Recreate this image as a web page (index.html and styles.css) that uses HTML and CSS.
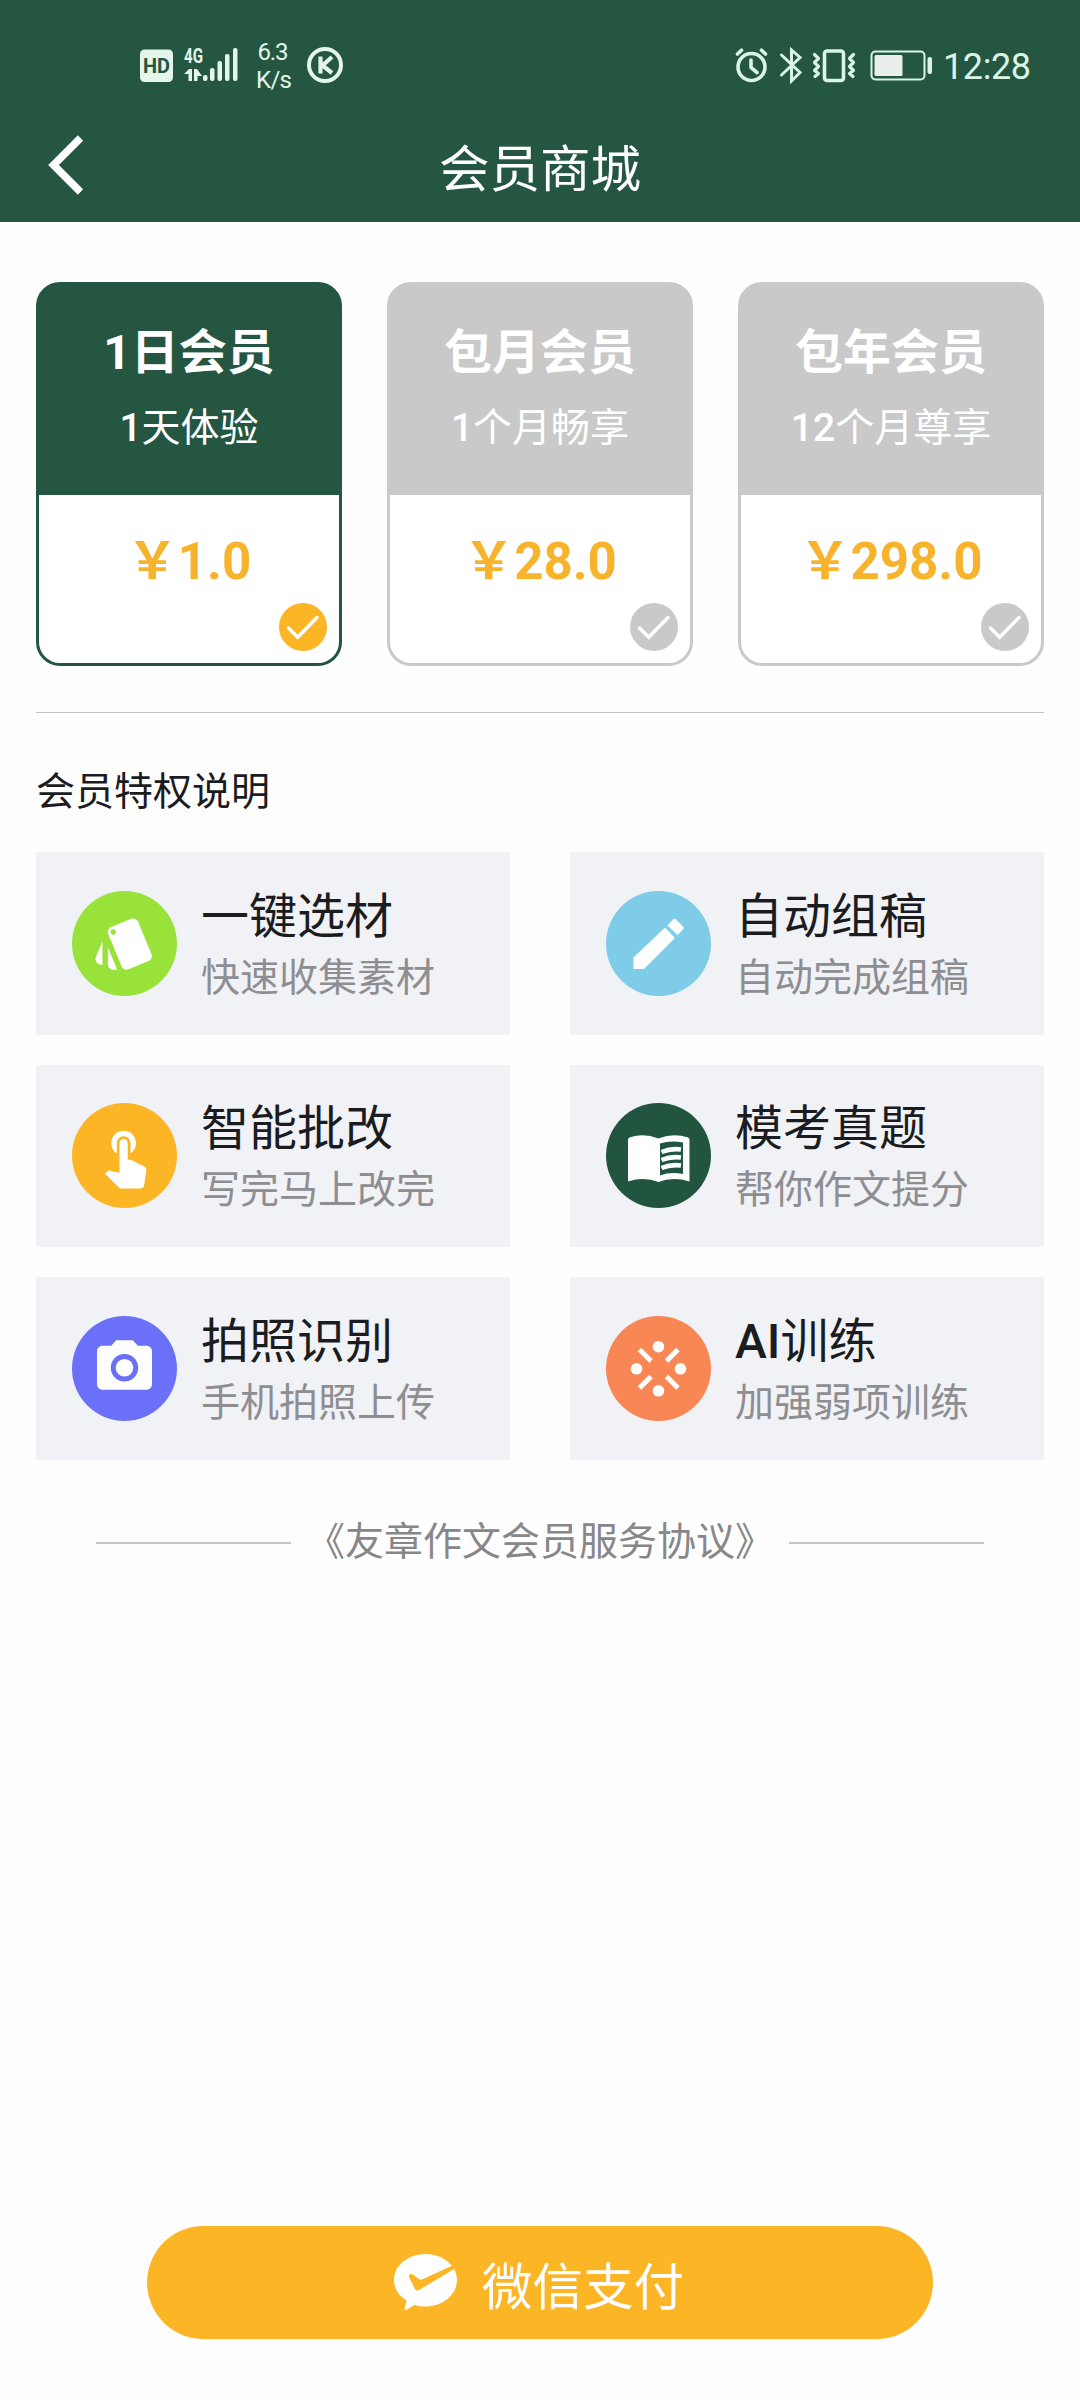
FILE: index.html
```html
<!DOCTYPE html>
<html lang="zh-CN">
<head>
<meta charset="utf-8">
<title>会员商城</title>
<link rel="stylesheet" href="styles.css">
</head>
<body>
<div class="app">
  <header class="top">
    <div class="status">
      <svg class="status-left" width="210" height="60" viewBox="138 36 210 60" fill="#e4f5ea">
        <rect x="140" y="49.500" width="33" height="32.500" rx="4.500"/>
        <text x="156.500" y="73" font-size="20.500" font-weight="700" text-anchor="middle" textLength="27" lengthAdjust="spacingAndGlyphs" fill="#245642">HD</text>
        <text x="184" y="62.500" font-size="20" font-weight="700" textLength="19" lengthAdjust="spacingAndGlyphs">4G</text>
        <path d="M184 74l5-5h3v12h-3.500v-7zM194 69h3l5 7h-4.500v5H194z"/>
        <rect x="203" y="75" width="4.500" height="6" rx="2"/>
        <rect x="210" y="68" width="4.500" height="13" rx="2"/>
        <rect x="217.500" y="61" width="4.500" height="20" rx="2"/>
        <rect x="225" y="54" width="4.500" height="27" rx="2"/>
        <rect x="233" y="48" width="4.500" height="33" rx="2"/>
        <text x="273" y="60" font-size="24" text-anchor="middle" textLength="31">6.3</text>
        <text x="274" y="88" font-size="24" text-anchor="middle" textLength="36">K/s</text>
        <circle cx="325" cy="65" r="16" fill="none" stroke="#e4f5ea" stroke-width="4"/>
        <path d="M320.500 56.500v17M332 57l-9.500 8.500L332 73" fill="none" stroke="#e4f5ea" stroke-width="4.200"/>
      </svg>
      <svg class="status-right" width="300" height="60" viewBox="732 36 300 60" fill="none" stroke="#daf5e6" stroke-linecap="round" stroke-linejoin="round">
        <circle cx="751.500" cy="67" r="13.500" stroke-width="3.600"/>
        <path d="M751 60v7.500l6 5M737.500 54l4-3.800M765.500 54l-4-3.800" stroke-width="3.600"/>
        <path d="M781.500 55L800 72.500l-8.500 8.500V50l8.500 7.500-18.500 17.500" stroke-width="3" stroke-linejoin="miter"/>
        <rect x="824.500" y="51" width="19" height="29.500" rx="2.500" stroke-width="3.600"/>
        <path d="M814.500 54.500l4 4-4 4 4 4-4 4 4 3-3.500 3M853.500 54.500l-4 4 4 4-4 4 4 4-4 3 3.500 3" stroke-width="3.200"/>
        <rect x="871.500" y="51.500" width="53" height="28" rx="4" stroke-width="2"/>
        <rect x="874.500" y="55" width="28" height="21" rx="1.500" fill="#e9efeb" stroke="none"/>
        <rect x="927.500" y="57" width="4.500" height="17" rx="2" fill="#daf5e6" stroke="none"/>
        <text x="943" y="79" font-size="36" fill="#daf5e6" stroke="none" textLength="88">12:28</text>
      </svg>
    </div>
    <div class="nav">
      <svg class="back" width="44" height="64" viewBox="44 133 44 64" fill="none" stroke="#fff" stroke-width="7.500"><path d="M80.500 138L53.500 165l27 27"/></svg>
      <h1 class="nav-title">会员商城</h1>
    </div>
  </header>

  <main class="content">
    <section class="plans">
      <article class="plan plan-active">
        <div class="plan-head"><h2 class="plan-name"><span class="latin">1</span>日会员</h2><p class="plan-note"><span class="latin">1</span>天体验</p></div>
        <p class="price">￥<span class="latin">1.0</span></p>
        <svg class="tick" viewBox="0 0 48 48"><circle cx="24" cy="24" r="24"/><path d="M9.500 25l9.200 9.300L38 14.500"/></svg>
      </article>
      <article class="plan">
        <div class="plan-head"><h2 class="plan-name">包月会员</h2><p class="plan-note"><span class="latin">1</span>个月畅享</p></div>
        <p class="price">￥<span class="latin">28.0</span></p>
        <svg class="tick" viewBox="0 0 48 48"><circle cx="24" cy="24" r="24"/><path d="M9.500 25l9.200 9.300L38 14.500"/></svg>
      </article>
      <article class="plan">
        <div class="plan-head"><h2 class="plan-name">包年会员</h2><p class="plan-note"><span class="latin">12</span>个月尊享</p></div>
        <p class="price">￥<span class="latin">298.0</span></p>
        <svg class="tick" viewBox="0 0 48 48"><circle cx="24" cy="24" r="24"/><path d="M9.500 25l9.200 9.300L38 14.500"/></svg>
      </article>
    </section>

    <h2 class="section-title">会员特权说明</h2>

    <section class="perks">
      <article class="perk">
        <svg class="perk-icon lime" viewBox="0 0 105 105"><path transform="translate(20 20) scale(2.7)" d="M2.53 19.65l1.34.56v-9.03l-2.43 5.86c-.41 1.02.08 2.19 1.09 2.61zm19.5-3.7L17.07 3.98c-.31-.75-1.04-1.21-1.81-1.23-.26 0-.53.04-.79.15L7.1 5.95c-.75.31-1.21 1.03-1.23 1.8-.01.27.04.54.15.8l4.96 11.97c.31.76 1.05 1.22 1.83 1.23.26 0 .52-.05.77-.15l7.36-3.05c1.02-.42 1.51-1.59 1.09-2.6zM7.88 8.75c-.55 0-1-.45-1-1s.45-1 1-1 1 .45 1 1-.45 1-1 1zm-2 11c0 1.1.9 2 2 2h1.45l-3.45-8.34v6.34z"/></svg>
        <div class="perk-text"><h3 class="perk-name">一键选材</h3><p class="perk-note">快速收集素材</p></div>
      </article>
      <article class="perk">
        <svg class="perk-icon sky" viewBox="0 0 105 105"><path d="M27.500 78V66.500L58 37.500q1-1 2 0l8 8.500q1 1 0 2L38 78zM61.500 34.500l5.500-6q1.500-1.500 3 0l7 7q1.500 1.500 0 3l-5.500 5.500z"/></svg>
        <div class="perk-text"><h3 class="perk-name">自动组稿</h3><p class="perk-note">自动完成组稿</p></div>
      </article>
      <article class="perk">
        <svg class="perk-icon amber" viewBox="0 0 105 105"><path transform="translate(20 19.500) scale(2.75)" d="M9 11.240V7.500C9 6.120 10.120 5 11.500 5S14 6.120 14 7.500v3.740c1.210-.81 2-2.180 2-3.740C16 5.010 13.990 3 11.500 3S7 5.010 7 7.500c0 1.560.79 2.930 2 3.740zm9.840 4.630l-4.540-2.260c-.17-.07-.35-.11-.54-.11H13v-6c0-.83-.67-1.500-1.500-1.500S10 6.670 10 7.500v10.740l-3.430-.72c-.08-.01-.15-.03-.24-.03-.31 0-.59.13-.79.33l-.79.8 4.940 4.940c.27.27.65.44 1.060.44h6.790c.75 0 1.330-.55 1.440-1.280l.75-5.270c.01-.07.02-.14.02-.2 0-.62-.38-1.160-.91-1.380z"/></svg>
        <div class="perk-text"><h3 class="perk-name">智能批改</h3><p class="perk-note">写完马上改完</p></div>
      </article>
      <article class="perk">
        <svg class="perk-icon forest" viewBox="0 0 105 105"><path fill-rule="evenodd" d="M22 36.500Q22 35 24 34.200Q38 29.500 52.500 35.500Q67 29.500 81.500 34.200Q83.500 35 83.500 36.500V78.500Q67 73.500 52.500 79Q38 73.500 22 78.500zM54 40.500V72.500Q65 68.500 77 71V39.500Q65 37 54 40.500z"/><path d="M55.500 49Q65 45 75 46.500M55.500 57Q65 53 75 54.500M55.500 65Q65 61 75 62.500" fill="none" stroke="#fff" stroke-width="4.600"/></svg>
        <div class="perk-text"><h3 class="perk-name">模考真题</h3><p class="perk-note">帮你作文提分</p></div>
      </article>
      <article class="perk">
        <svg class="perk-icon violet" viewBox="0 0 105 105"><g transform="translate(19.500 18.800) scale(2.75)"><circle cx="12" cy="12" r="3.200"/><path d="M9 2L7.170 4H4c-1.100 0-2 .9-2 2v12c0 1.100.9 2 2 2h16c1.100 0 2-.9 2-2V6c0-1.100-.9-2-2-2h-3.170L15 2H9zm3 15c-2.760 0-5-2.240-5-5s2.240-5 5-5 5 2.240 5 5-2.240 5-5 5z"/></g></svg>
        <div class="perk-text"><h3 class="perk-name">拍照识别</h3><p class="perk-note">手机拍照上传</p></div>
      </article>
      <article class="perk">
        <svg class="perk-icon coral" viewBox="0 0 105 105"><circle cx="52.500" cy="30.700" r="5.800"/><circle cx="30.500" cy="52.800" r="5.800"/><circle cx="74.500" cy="52.800" r="5.800"/><circle cx="52.500" cy="74.800" r="5.800"/><path d="M33.500 33.500l11.500 11.500M72 33.500L60.500 45M33.500 72L45 60.500M72 72L60.500 60.500" stroke="#fff" stroke-width="5"/></svg>
        <div class="perk-text"><h3 class="perk-name"><span class="latin">AI</span>训练</h3><p class="perk-note">加强弱项训练</p></div>
      </article>
    </section>

    <p class="agreement">《友章作文会员服务协议》</p>
  </main>

  <footer class="footer">
    <button class="pay" type="button">
      <svg class="pay-icon" width="63" height="57" viewBox="0 0 63 57"><path fill="#fff" d="M31.500 0C49 0 63 11.500 63 26S49 52.500 31.500 52.500q-6 0-11-1.500L12 56q-1.800.5-1.300-1.500L12.500 46.500Q0 39 0 26C0 11.500 14 0 31.500 0z"/><path fill="#fcb525" d="M16 20.500Q14.500 21 15 23L21 35q1.500 2.500 4 1L61 14.500 58.500 11.500 28 25.500q-1.500.5-3-.5L18 20q-1-.5-2 .5z"/></svg>
      <span>微信支付</span>
    </button>
  </footer>
</div>
</body>
</html>
```

FILE: styles.css
```css
* { box-sizing: border-box; margin: 0; padding: 0; }

body {
  background: #fefefe;
  color: #1b1c1f;
  font-family: Roboto, "Noto Sans CJK SC", sans-serif;
}

h1, h2, h3 { font-weight: 400; }

.app { display: flex; flex-direction: column; width: 1080px; height: 2400px; }

/* Header */
.top { height: 222px; background: #245642; color: #fff; }
.status { display: flex; justify-content: space-between; height: 110px; padding: 36px 48px 0 138px; }
.nav { display: grid; grid-template-columns: 44px 1fr 44px; align-items: center; height: 110px; padding: 0 44px; }
.nav-title { font-size: 50.500px; line-height: 74px; padding-top: 10px; text-align: center; }

.content { flex: 1; padding: 60px 36px 0; }

/* Plans */
.plans {
  display: grid;
  grid-template-columns: repeat(3, 306px);
  justify-content: space-between;
  padding-bottom: 46px;
  border-bottom: 1px solid #c2c2c2;
}
.plan {
  --tone: #c9c9c9;
  --tick: #c9c9c9;
  position: relative;
  height: 384px;
  border: 3px solid var(--tone);
  border-radius: 24px;
  background: var(--tone);
  overflow: hidden;
  text-align: center;
}
.plan-active { --tone: #245642; --tick: #fcb525; }
.plan-head { height: 210px; padding-top: 32px; color: #fff; }
.plan-name { font-size: 48px; line-height: 72px; font-weight: 700; }
.plan-note { font-size: 39px; line-height: 58px; padding-top: 10px; }
.plan-note .latin, .perk-name .latin { font-weight: 500; }
.price { height: 168px; padding-top: 29px; background: #fff; color: #f7b32b; font-size: 51px; line-height: 76px; font-weight: 700; }
.tick { position: absolute; right: 12px; bottom: 12px; width: 48px; height: 48px; }
.tick circle { fill: var(--tick); }
.tick path { fill: none; stroke: #fff; stroke-width: 3.500; stroke-linecap: round; }

.section-title { padding: 50px 0 31px; font-size: 39px; line-height: 58px; }

/* Perks */
.perks { display: grid; grid-template-columns: 474px 474px; gap: 30px 60px; }
.perk { display: flex; align-items: center; gap: 24px; height: 182.500px; padding-left: 36px; background: #f0f2f5; }
.perk-icon { width: 105px; height: 105px; border-radius: 50%; fill: #fff; }
.perk-text { padding-top: 5px; }
.perk-name { font-size: 48px; line-height: 64px; }
.perk-note { color: #8e8e92; font-size: 39px; line-height: 58px; }
.lime { background: #98e23a; }
.sky { background: #7ecce8; }
.amber { background: #fcb525; }
.forest { background: #215540; }
.violet { background: #6a70f8; }
.coral { background: #f98756; }

/* Agreement link between two rules */
.agreement {
  display: flex;
  align-items: center;
  justify-content: space-between;
  padding: 53px 60px 0;
  color: #87878a;
  font-size: 39px;
  line-height: 58px;
}
.agreement::before, .agreement::after { content: ""; width: 195px; height: 2px; margin-top: 3px; background: #c4c4c4; }

/* Payment */
.footer { display: flex; justify-content: center; padding-bottom: 61px; }
.pay {
  display: flex;
  align-items: center;
  justify-content: center;
  gap: 25px;
  width: 786px;
  height: 113px;
  padding-right: 2px;
  border: 0;
  border-radius: 57px;
  background: #fcb525;
  color: #fff;
  font: 50.500px/74px Roboto, "Noto Sans CJK SC", sans-serif;
}
.pay span { padding-top: 10px; }
```
